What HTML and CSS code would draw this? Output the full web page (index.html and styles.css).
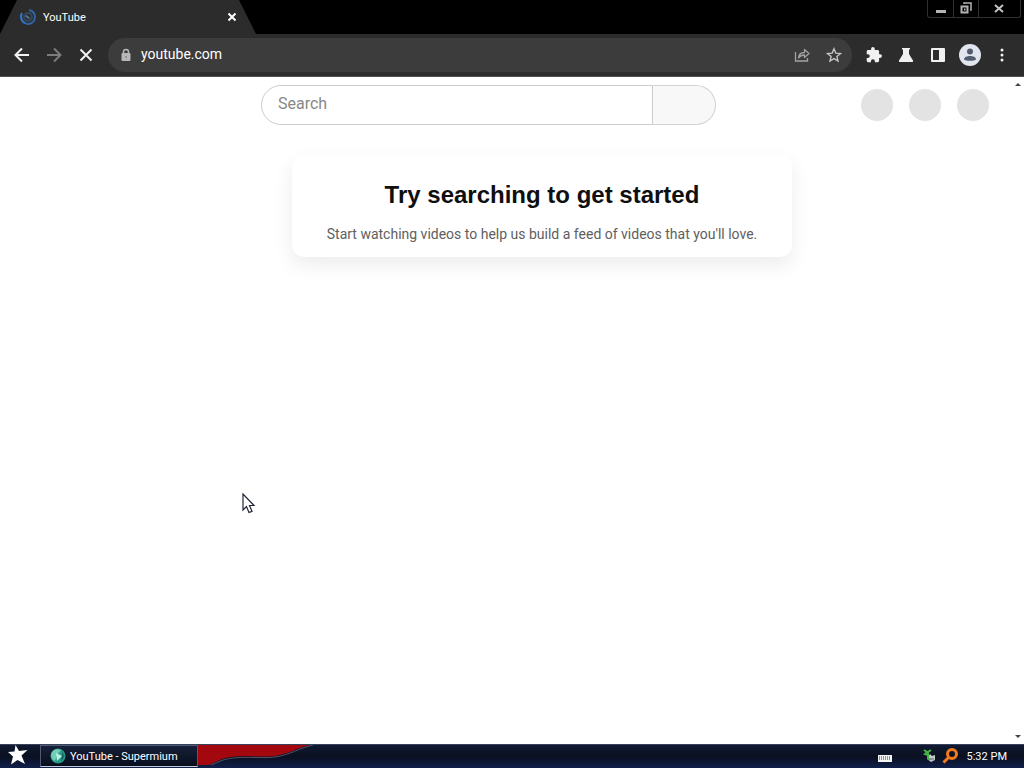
FILE: index.html
```
<!DOCTYPE html>
<html lang="en">
<head>
    <meta charset="UTF-8">
    <meta name="viewport" content="width=device-width, initial-scale=1.0">
    <title>YouTube</title>
    <link rel="stylesheet" href="styles.css">
</head>
<body>
    <header class="browser">
        <div class="tabstrip">
            <div class="tab">
                <svg class="tab__spinner" width="18" height="18" viewBox="0 0 18 18" fill="none">
                    <path d="M10 2a7 7 0 1 1-7.500 4.500" stroke="#2d66a8" stroke-width="2"/>
                    <path d="M3 5a7 7 0 0 0 3 10" stroke="#3574bd" stroke-width="2"/>
                    <circle cx="9" cy="9" r="4" stroke="#35475e" stroke-width="2"/>
                    <path d="M6.500 7.500l4 3" stroke="#54708f" stroke-width="2"/>
                </svg>
                <span class="tab__title">YouTube</span>
                <button class="tab__close" aria-label="Close tab">
                    <svg width="10" height="10" viewBox="0 0 10 10"><path d="M1.500 1.500l7 7M8.500 1.500l-7 7" stroke="#fff" stroke-width="2"/></svg>
                </button>
            </div>
            <div class="window-buttons">
                <button aria-label="Minimize"><svg width="12" height="14" viewBox="0 0 12 14"><path d="M1 9.500h10" stroke="#b4b4b4" stroke-width="3"/></svg></button>
                <button aria-label="Restore"><svg width="12" height="14" viewBox="0 0 12 14" fill="none" stroke="#b4b4b4"><path d="M4 2V1h7v7h-1" stroke-width="1.500"/><path d="M1.500 4.500h6v6h-6z" stroke-width="2"/><path d="M4 7.500h1.500" stroke-width="2"/></svg></button>
                <button class="wide" aria-label="Close"><svg width="12" height="14" viewBox="0 0 12 14"><path d="M2 3l8 7M10 3l-8 7" stroke="#c4c4c4" stroke-width="2"/></svg></button>
            </div>
        </div>
        <nav class="toolbar">
            <button aria-label="Back"><svg width="16" height="16" viewBox="0 0 16 16" fill="none" stroke="#f1f1f1" stroke-width="2"><path d="M15 8H2M8 1.500L1.500 8 8 14.500"/></svg></button>
            <button aria-label="Forward"><svg width="16" height="16" viewBox="0 0 16 16" fill="none" stroke="#7c7c7c" stroke-width="2"><path d="M1 8h13M8 1.500L14.500 8 8 14.500"/></svg></button>
            <button aria-label="Stop"><svg width="16" height="16" viewBox="0 0 16 16" fill="none" stroke="#f1f1f1" stroke-width="2"><path d="M2.500 2.500l11 11M13.500 2.500l-11 11"/></svg></button>
            <div class="omnibox">
                <svg width="10" height="14" viewBox="0 0 10 14"><path d="M2.500 6V4a2.500 2.500 0 0 1 5 0v2" fill="none" stroke="#b8b8b8" stroke-width="1.500"/><rect x="0.500" y="5" width="9" height="8" rx="1" fill="#b8b8b8"/><circle cx="5" cy="9" r="1" fill="#8a8a8a"/></svg>
                <input type="text" value="youtube.com" aria-label="Address">
                <button aria-label="Share"><svg width="16" height="16" viewBox="0 0 16 16" fill="none" stroke="#a2a2a2" stroke-width="1.300"><path d="M1.500 5v9h12v-3"/><path d="M4.500 11c.3-4 2.500-5.500 6-5.500V2.500L15 6.500l-4.500 4V8c-3 0-4.500.7-6 3z" stroke-linejoin="round"/></svg></button>
                <button aria-label="Bookmark this tab"><svg width="16" height="16" viewBox="0 0 16 16" fill="none" stroke="#c4c4c4" stroke-width="1.400"><path d="M8 1.800l1.800 4.300 4.700.4-3.600 3 1.100 4.600-4-2.500-4 2.500 1.100-4.600-3.600-3 4.700-.4z"/></svg></button>
            </div>
            <button aria-label="Extensions"><svg width="16" height="16" viewBox="1 1 22 22" fill="#f1f1f1"><path d="M20.500 11H19V7c0-1.100-.9-2-2-2h-4V3.500a2.500 2.500 0 0 0-5 0V5H4c-1.100 0-2 .9-2 2v3.800h1.500a2.700 2.700 0 0 1 0 5.400H2V20c0 1.100.9 2 2 2h3.800v-1.500a2.700 2.700 0 0 1 5.400 0V22H17c1.100 0 2-.9 2-2v-4h1.500a2.500 2.500 0 0 0 0-5z"/></svg></button>
            <button aria-label="Experiments"><svg width="16" height="16" viewBox="0 0 16 16" fill="#f1f1f1"><path d="M4 1h8v1.500h-1V7l4 6.500c.4.800 0 1.500-1 1.500H2c-1 0-1.400-.7-1-1.500L5 7V2.500H4z"/></svg></button>
            <button aria-label="Side panel"><svg width="16" height="16" viewBox="0 0 16 16"><rect x="1" y="1" width="14" height="14" rx="1" fill="#f1f1f1"/><path d="M3 3h6v10H3z" fill="#2c2c2c"/></svg></button>
            <button aria-label="Profile"><svg width="22" height="22" viewBox="0 0 22 22"><circle cx="11" cy="11" r="11" fill="#e2e5ee"/><circle cx="11" cy="7.500" r="3" fill="#525d70"/><path d="M5 15.500c0-2.500 3-3.500 6-3.500s6 1 6 3.500c-1.500 1.700-10.500 1.700-12 0z" fill="#525d70"/></svg></button>
            <button aria-label="Menu"><svg width="4" height="16" viewBox="0 0 4 16" fill="#f1f1f1"><circle cx="2" cy="3" r="1.500"/><circle cx="2" cy="8" r="1.500"/><circle cx="2" cy="13" r="1.500"/></svg></button>
        </nav>
    </header>

    <div class="viewport">
        <div class="page">
            <div class="masthead">
                <form class="search">
                    <input type="text" placeholder="Search" aria-label="Search">
                    <button type="button" aria-label="Search"></button>
                </form>
                <div class="masthead__icons">
                    <span></span>
                    <span></span>
                    <span></span>
                </div>
            </div>
            <main>
                <section class="nudge">
                    <h1>Try searching to get started</h1>
                    <p>Start watching videos to help us build a feed of videos that you'll love.</p>
                </section>
            </main>
        </div>
        <div class="scrollbar">
            <svg width="6" height="3" viewBox="0 0 6 3"><path d="M0 3l3-3 3 3z" fill="#444"/></svg>
            <svg width="6" height="3" viewBox="0 0 6 3"><path d="M0 0l3 3 3-3z" fill="#444"/></svg>
        </div>
        <svg class="pointer" width="14" height="22" viewBox="0 0 14 22"><path d="M1 1v16l3.500-3.500 2.500 6 3-1.200-2.500-5.800H12z" fill="#fff" stroke="#222638" stroke-width="1.200"/></svg>
    </div>

    <footer class="taskbar">
        <button class="start" aria-label="Start">
            <svg width="20" height="20" viewBox="0 0 20 20"><path d="M7.500 0l3.500 6 8.500-1-6 5.500 3.500 8.500-7.500-4-6.500 4.500 2-8L0 7l6.500-.5z" fill="#fff"/></svg>
        </button>
        <button class="task">
            <svg width="16" height="16" viewBox="0 0 16 16"><circle cx="8" cy="8" r="7.500" fill="#2a998a"/><path d="M2 4a7 7 0 0 1 9-2L7 7 5 13C1 11 0 7 2 4z" fill="#72cfb5"/><path d="M6 5l6 3-5 5z" fill="#b9f3dc"/><path d="M12 4c3 3 2 7-1 9l1-5z" fill="#126260"/></svg>
            YouTube - Supermium
        </button>
        <svg class="swoosh" width="120" height="22" viewBox="0 0 120 22"><path d="M0 0h112C98 3 91 9 77 11S40 9 24 14L11 20H0z" fill="#a2080d"/><path d="M115 0C101 3 92 10 77 12S41 10 25 15l-12 5" fill="none" stroke="#4e5267" stroke-width="1"/></svg>
        <div class="tray">
            <svg class="tray__keyboard" width="14" height="8" viewBox="0 0 14 8"><rect width="14" height="7" y="1" fill="#f4f4f4"/><path d="M1 3h12M1 5h12" stroke="#30333c" stroke-dasharray="1 1"/></svg>
            <svg width="14" height="16" viewBox="0 0 14 16"><path d="M5 9l2-3 2 2 3-1v5l-4 2-4-3z" fill="#c2c8c4"/><path d="M1 2l3 2-2 2 3 1v3l2 2M8 2L5 4v3" fill="none" stroke="#45b448" stroke-width="2"/><path d="M7 11h4" stroke="#626873"/></svg>
            <svg width="16" height="16" viewBox="0 0 16 16" fill="none" stroke="#f27a1c"><circle cx="10" cy="6" r="4.500" stroke-width="3"/><path d="M7 9l-5.500 5.500" stroke-width="3"/></svg>
            <time>5:32 PM</time>
        </div>
    </footer>
</body>
</html>
```
FILE: styles.css
```
* {
    box-sizing: border-box;
}
body {
    display: flex;
    flex-direction: column;
    height: 100vh;
    margin: 0;
    background-color: #fff;
    font-family: Roboto, "Liberation Sans", sans-serif;
}
button {
    display: flex;
    align-items: center;
    justify-content: center;
    padding: 0;
    border: 0;
    background: none;
}
input {
    min-width: 0;
    padding: 0;
    border: 0;
    outline: 0;
    background: none;
}
svg {
    flex: none;
}

/* browser */
.browser,
.taskbar {
    flex: none;
    color: #fff;
}
.tabstrip {
    display: flex;
    justify-content: space-between;
    align-items: flex-start;
    height: 34px;
    background-color: #000;
}
.tab {
    display: flex;
    align-items: center;
    width: 256px;
    height: 34px;
    padding: 0 18px 0 19px;
    background-color: #2c2c2c;
    clip-path: polygon(0 100%, 17px 0, 239px 0, 100% 100%);
}
.tab__title {
    flex: 1;
    padding-left: 6px;
    font-size: 11px;
}
.tab__close {
    width: 12px;
    height: 12px;
}
.window-buttons {
    display: flex;
    margin-right: 3px;
    border: 1px solid #303030;
    border-top: 0;
    border-radius: 0 0 3px 3px;
}
.window-buttons button {
    width: 25px;
    height: 17px;
}
.window-buttons button + button {
    border-left: 1px solid #303030;
}
.window-buttons .wide {
    width: 42px;
    padding-right: 2px;
}
.toolbar {
    display: flex;
    align-items: center;
    height: 43px;
    padding: 0 6px;
    border-bottom: 1px solid #505050;
    background-color: #2c2c2c;
}
.toolbar button {
    flex: none;
    width: 32px;
    height: 32px;
}
.omnibox {
    display: flex;
    flex: 1;
    align-items: center;
    height: 34px;
    margin: 0 6px;
    padding: 0 2px 0 13px;
    border-radius: 17px;
    background-color: #3c3c3c;
}
.omnibox input {
    flex: 1;
    padding: 0 0 2px 10px;
    font-family: Roboto, sans-serif;
    font-size: 14px;
    color: #fff;
}

/* page */
.viewport {
    position: relative;
    display: flex;
    flex: 1;
    min-height: 0;
}
.page {
    flex: 1;
}
.masthead {
    display: grid;
    grid-template-columns: 261fr 455fr 296fr;
    align-items: center;
    height: 56px;
}
.search {
    display: flex;
    grid-column: 2;
    height: 40px;
}
.search input {
    flex: 1;
    padding: 0 16px 3px;
    border: 1px solid #ccc;
    border-radius: 20px 0 0 20px;
    font-family: Roboto, sans-serif;
    font-size: 16px;
}
.search input::placeholder {
    color: #888;
}
.search button {
    width: 63px;
    border: 1px solid #d3d3d3;
    border-left: 0;
    border-radius: 0 20px 20px 0;
    background-color: #f8f8f8;
}
.masthead__icons {
    display: flex;
    justify-content: flex-end;
    gap: 16px;
    padding-right: 23px;
}
.masthead__icons span {
    width: 32px;
    height: 32px;
    border-radius: 50%;
    background-color: #e3e3e3;
}
main {
    padding: 22px 0 0 72px;
}
.nudge {
    max-width: 500px;
    margin: 0 auto;
    padding: 24px 16px 12px;
    border-radius: 12px;
    box-shadow: 0 8px 20px rgba(0, 0, 0, 0.08);
    text-align: center;
}
.nudge h1 {
    margin: 0 0 12px;
    font-family: "Liberation Sans", sans-serif;
    font-size: 24px;
    line-height: 32px;
    color: #0f0f0f;
}
.nudge p {
    margin: 0;
    font-size: 14px;
    line-height: 22px;
    color: #606060;
}
.scrollbar {
    display: flex;
    flex-direction: column;
    align-items: center;
    justify-content: space-between;
    width: 12px;
    padding: 6px 0;
}
.pointer {
    position: absolute;
    top: 416px;
    left: 242px;
}

/* taskbar */
.taskbar {
    display: flex;
    align-items: center;
    height: 24px;
    padding-bottom: 1px;
    border-top: 1px solid #38425a;
    background: linear-gradient(#111a33, #0a1020 50%, #10204c);
    font-size: 11px;
}
.start {
    width: 36px;
    height: 22px;
    padding-bottom: 2px;
}
.task {
    gap: 4px;
    justify-content: flex-start;
    width: 158px;
    height: 22px;
    margin-left: 4px;
    padding-left: 9px;
    border: 1px solid #4e5a74;
    border-bottom-color: #c3c9d8;
    background: linear-gradient(#17203a, #080e1b);
    font-family: Roboto, sans-serif;
    font-size: 11px;
    color: #fff;
}
.tray {
    display: flex;
    align-items: center;
    gap: 5px;
    margin-left: auto;
    padding-right: 17px;
}
.tray__keyboard {
    margin: 4px 26px 0 0;
}
.tray time {
    padding-left: 4px;
}
```
